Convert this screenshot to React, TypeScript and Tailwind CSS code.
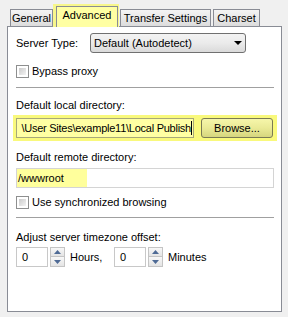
import React from "react";

function Tab({ className, children }: { className: string; children: React.ReactNode }) {
  return (
    <div
      className={`h-[17px] border border-b-0 border-[#898c95] bg-linear-to-b from-[#f4f4f4] to-[#dcdcdc] flex justify-center pt-[1px] ${className}`}
    >
      {children}
    </div>
  );
}

function Checkbox({ label }: { label: string }) {
  return (
    <div className="flex items-center h-[14px]">
      <div className="w-[13px] h-[13px] border border-[#8e8f8f] bg-white p-[2px]">
        <div className="w-full h-full bg-linear-to-br from-[#cbcbcb] to-[#f4f4f4]" />
      </div>
      <span className="ml-[3px]">{label}</span>
    </div>
  );
}

function Spinner() {
  return (
    <div className="flex flex-col w-[15px] h-[20px]">
      <div className="h-[10px] border border-[#c4c4c4] bg-linear-to-b from-[#f8f8f8] to-[#e4e4e4] flex items-center justify-center">
        <svg width="7" height="4" viewBox="0 0 7 4">
          <path d="M0 4 L3.5 0 L7 4 Z" fill="#4e6a95" />
        </svg>
      </div>
      <div className="h-[10px] border border-t-0 border-[#c4c4c4] bg-linear-to-b from-[#f8f8f8] to-[#e4e4e4] flex items-center justify-center">
        <svg width="7" height="4" viewBox="0 0 7 4">
          <path d="M0 0 L7 0 L3.5 4 Z" fill="#4e6a95" />
        </svg>
      </div>
    </div>
  );
}

function NumBox({ value }: { value: string }) {
  return (
    <div className="w-[32px] h-[20px] border border-[#c8c8c8] bg-white flex items-center pl-[5px]">
      {value}
    </div>
  );
}

export default function App() {
  return (
    <div className="w-[288px] h-[317px] bg-[#f0f0f0] font-['Liberation_Sans',Arial,sans-serif] text-[11px] leading-[14px] text-black pt-[4px] pl-[7px]">
      {/* tab strip */}
      <div className="flex items-end h-[22px] pl-[3px] relative z-10">
        <Tab className="w-[43px]">General</Tab>
        <div className="w-[66px] h-[23px] -mb-px bg-[#f7f78c] pl-[3px] pr-[1px] pt-[2px]">
          <div className="h-full border border-b-0 border-[#898c95] bg-[#ffffa3] flex justify-center pt-[1px]">
            Advanced
          </div>
        </div>
        <Tab className="w-[91px] ml-px">Transfer Settings</Tab>
        <Tab className="w-[47px] ml-[2px]">Charset</Tab>
      </div>

      {/* panel */}
      <div className="w-[275px] h-[286px] border border-[#898c95] bg-white pl-[8px] pr-[7px] pt-[6px] flex flex-col">
        <div className="flex items-center h-[20px]">
          <div className="w-[74px]">Server Type:</div>
          <div className="w-[156px] h-[20px] border border-[#707070] rounded-[3px] bg-linear-to-b from-[#f3f3f3] via-[#ebebeb] to-[#dadada] flex items-center pl-[3px] pr-[3px]">
            <span className="flex-1">Default (Autodetect)</span>
            <svg width="8" height="4" viewBox="0 0 8 4">
              <path d="M0 0 L8 0 L4 4 Z" fill="#000" />
            </svg>
          </div>
        </div>

        <div className="mt-[11px]">
          <Checkbox label="Bypass proxy" />
        </div>

        <div className="mt-[9px] h-px bg-[#a0a0a0]" />

        <div className="mt-[10px]">Default local directory:</div>

        <div className="mt-[3px] -ml-[3px] w-[264px] h-[26px] bg-[#f9f97c] pl-[3px] pt-[3px] flex">
          <div className="w-[178px] h-[20px] border border-[#a7a87a] bg-[#ffffa3] flex items-center justify-end pr-[1px] overflow-hidden whitespace-nowrap">
            <span className="tracking-[-0.25px] shrink-0">\User Sites\example11\Local Publish</span>
            <span className="w-px h-[14px] bg-black shrink-0" />
          </div>
          <div className="ml-[7px] w-[72px] h-[20px] border border-[#7a7a55] rounded-[3px] bg-linear-to-b from-[#f6f6aa] via-[#eaea96] to-[#d6d67e] flex items-center justify-center">
            Browse...
          </div>
        </div>

        <div className="mt-[9px]">Default remote directory:</div>

        <div className="mt-[4px] w-[258px] h-[20px] border border-[#d4d4d4] bg-white flex">
          <div className="w-[70px] h-full bg-[#ffff9c] flex items-center pl-px">/wwwroot</div>
        </div>

        <div className="mt-[7px]">
          <Checkbox label="Use synchronized browsing" />
        </div>

        <div className="mt-[8px] h-px bg-[#a0a0a0]" />

        <div className="mt-[12px]">Adjust server timezone offset:</div>

        <div className="mt-[3px] flex items-center h-[20px]">
          <NumBox value="0" />
          <div className="ml-[2px]">
            <Spinner />
          </div>
          <div className="ml-[5px] w-[44px]">Hours,</div>
          <NumBox value="0" />
          <div className="ml-[2px]">
            <Spinner />
          </div>
          <div className="ml-[5px]">Minutes</div>
        </div>
      </div>
    </div>
  );
}
